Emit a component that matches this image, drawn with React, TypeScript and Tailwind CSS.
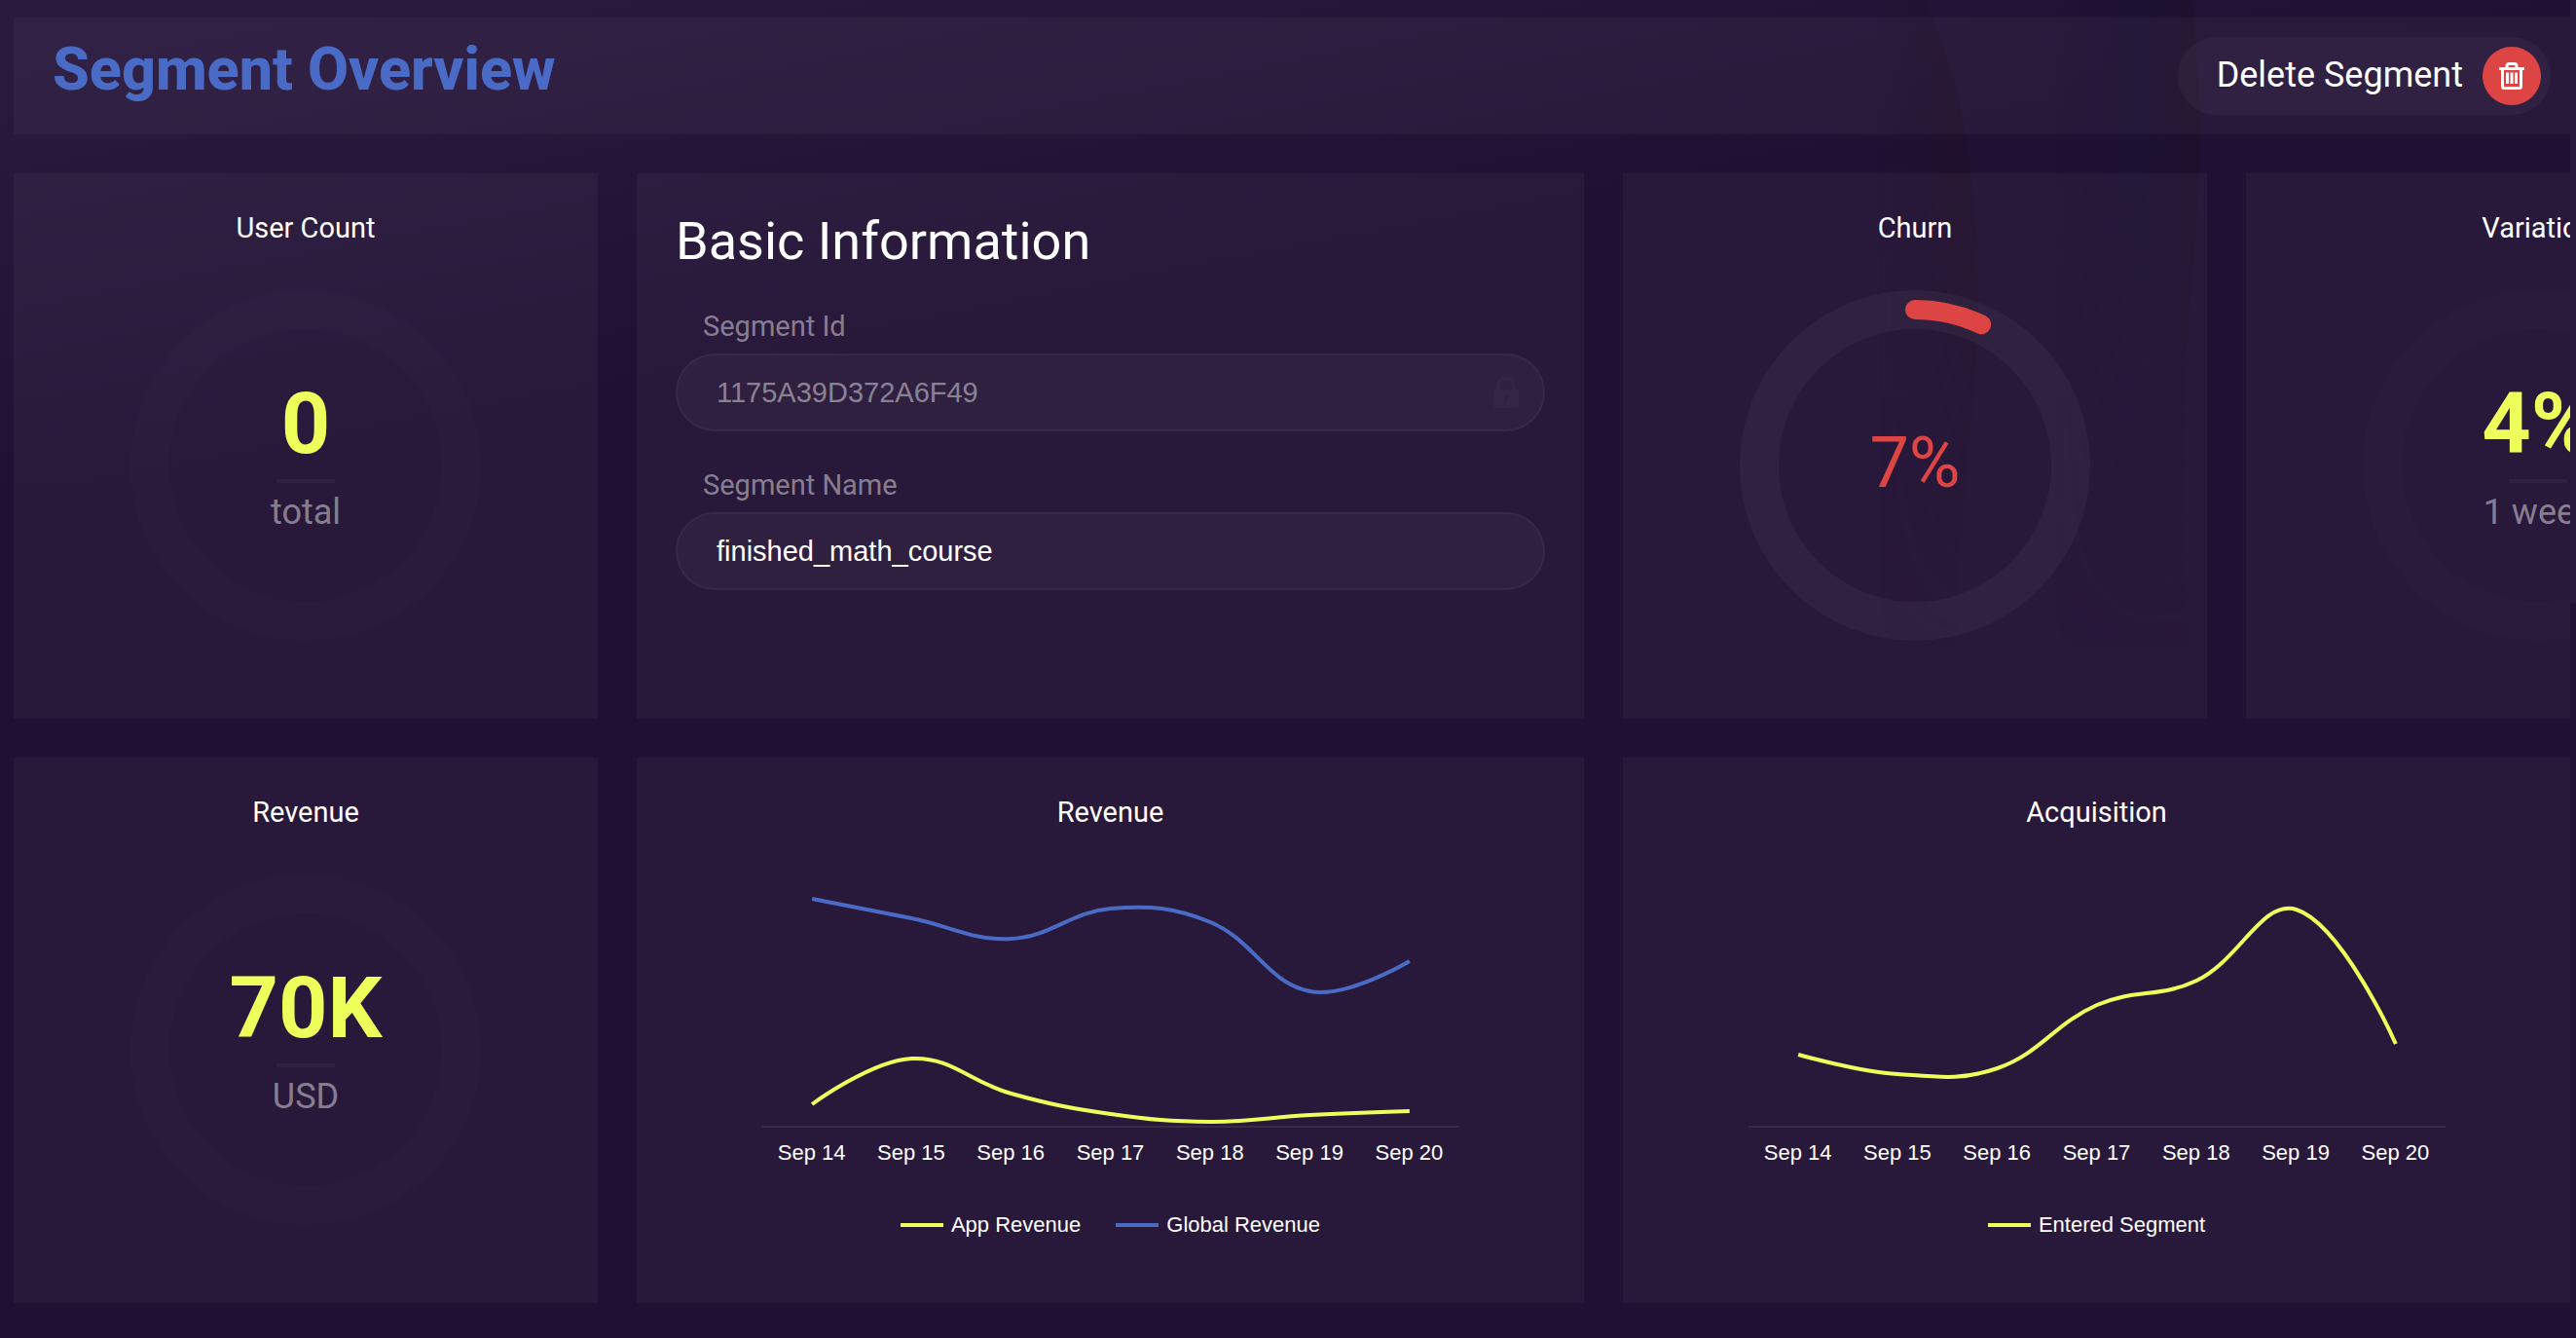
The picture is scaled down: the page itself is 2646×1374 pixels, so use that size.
import type { ReactNode } from "react";

type Series = { name: string; color: string; points: number[] };

const DAYS = ["Sep 14", "Sep 15", "Sep 16", "Sep 17", "Sep 18", "Sep 19", "Sep 20"];
const YELLOW = "#eeff5c";
const BLUE = "#4a6bc5";

const REVENUE: Series[] = [
  { name: "App Revenue", color: YELLOW, points: [234, 187, 223, 244, 252, 245, 241] },
  { name: "Global Revenue", color: BLUE, points: [23, 43, 64, 33, 47, 118, 87] },
];

const ACQUISITION: Series[] = [
  { name: "Entered Segment", color: YELLOW, points: [183, 203, 197, 132, 107, 34, 172] },
];

const CHART_WIDTH = 716;
const STEP = CHART_WIDTH / 7;

/* Smooth curve through evenly spaced points; the two ends carry no tangent. */
function curve(values: number[]): string {
  const pts = values.map((y, i) => ({ x: STEP * (i + 0.5), y }));
  const cps = pts.map((p, i) => {
    if (i === 0 || i === pts.length - 1) return { before: p, after: p };
    const a = pts[i - 1];
    const b = pts[i + 1];
    const d1 = Math.hypot(p.x - a.x, p.y - a.y);
    const d2 = Math.hypot(b.x - p.x, b.y - p.y);
    const f1 = (0.4 * d1) / (d1 + d2);
    const f2 = (0.4 * d2) / (d1 + d2);
    return {
      before: { x: p.x - f1 * (b.x - a.x), y: p.y - f1 * (b.y - a.y) },
      after: { x: p.x + f2 * (b.x - a.x), y: p.y + f2 * (b.y - a.y) },
    };
  });
  return pts
    .map((p, i) => {
      if (i === 0) return `M${p.x} ${p.y}`;
      const c1 = cps[i - 1].after;
      const c2 = cps[i].before;
      return `C${c1.x} ${c1.y} ${c2.x} ${c2.y} ${p.x} ${p.y}`;
    })
    .join(" ");
}

function Card({ title, children, className = "" }: { title: string; children: ReactNode; className?: string }) {
  return (
    <section className={`flex h-[560px] flex-col items-center bg-white/[0.035] px-10 pt-10 ${className}`}>
      <h2 className="text-[29px] leading-8 text-white">{title}</h2>
      {children}
    </section>
  );
}

function StatCard({ title, value, unit, className }: { title: string; value: string; unit: string; className?: string }) {
  return (
    <Card title={title} className={className}>
      <div className="mt-12 flex size-[360px] shrink-0 flex-col items-center rounded-full border-[40px] border-white/[0.012] pt-11">
        <span className="text-[88px] leading-[106px] font-bold text-[#eeff5c]">{value}</span>
        <span className="mt-1 h-1 w-[60px] bg-white/[0.035]" />
        <span className="mt-1.5 text-[36px] leading-12 text-white/45">{unit}</span>
      </div>
    </Card>
  );
}

function ChurnCard({ percent }: { percent: number }) {
  const length = 2 * Math.PI * 160;
  return (
    <Card title="Churn" className="w-[600px] shrink-0">
      <div className="relative mt-12 flex size-[360px] shrink-0 items-center justify-center">
        <svg className="absolute inset-0 size-full" viewBox="0 0 360 360" fill="none" aria-hidden="true">
          <circle cx="180" cy="180" r="160" stroke="white" strokeOpacity="0.04" strokeWidth="40" />
          <circle
            cx="180"
            cy="180"
            r="160"
            stroke="#dd4444"
            strokeWidth="20"
            strokeLinecap="round"
            strokeDasharray={`${(length * percent) / 100} ${length}`}
            transform="rotate(-90 180 180)"
          />
        </svg>
        <span className="pb-1 text-[72px] leading-[84px] text-[#dd4444]">{percent}%</span>
      </div>
    </Card>
  );
}

function ChartCard({ title, series }: { title: string; series: Series[] }) {
  return (
    <Card title={title} className="min-w-0">
      <div className="mt-[50px] flex w-full max-w-[716px] flex-col font-['Liberation_Sans',Arial,sans-serif] text-[22px] leading-7 text-white">
        <svg className="block w-full" viewBox="0 0 716 258" fill="none" role="img" aria-label={title}>
          <path d="M0 257H716" stroke="white" strokeOpacity="0.08" strokeWidth="2" />
          {series.map((s) => (
            <path key={s.name} d={curve(s.points)} stroke={s.color} strokeWidth="4" strokeLinejoin="round" />
          ))}
        </svg>
        <div className="mt-3 grid grid-cols-7 text-center whitespace-nowrap">
          {DAYS.map((day) => (
            <span key={day}>{day}</span>
          ))}
        </div>
        <ul className="mt-[46px] flex justify-center gap-9">
          {series.map((s) => (
            <li key={s.name} className="flex items-center gap-2">
              <span className="h-1 w-11" style={{ backgroundColor: s.color }} />
              {s.name}
            </li>
          ))}
        </ul>
      </div>
    </Card>
  );
}

function Field({ id, label, value, locked = false }: { id: string; label: string; value: string; locked?: boolean }) {
  return (
    <div className="flex flex-col">
      <label htmlFor={id} className="pl-7 text-[29px] leading-9 text-white/45">
        {label}
      </label>
      <div className="relative mt-2.5">
        <input
          id={id}
          type="text"
          defaultValue={value}
          disabled={locked}
          className="h-20 w-full rounded-full border-2 border-white/[0.035] bg-white/[0.035] px-10 font-['Liberation_Sans',Arial,sans-serif] text-[29px] text-white outline-none disabled:text-white/45"
        />
        {locked && (
          <svg className="absolute top-6 right-[27px] h-8 w-[26px]" viewBox="0 0 26 32" aria-hidden="true">
            <path d="M5 14V9a8 8 0 0 1 16 0v5" fill="none" stroke="#342445" strokeWidth="4" />
            <path
              fillRule="evenodd"
              fill="#342445"
              d="M3 13h20a3 3 0 0 1 3 3v13a3 3 0 0 1-3 3H3a3 3 0 0 1-3-3V16a3 3 0 0 1 3-3Zm10 6a2 2 0 0 0-1 3.700V27h2v-4.300A2 2 0 0 0 13 19Z"
            />
          </svg>
        )}
      </div>
    </div>
  );
}

function TrashIcon() {
  return (
    <svg className="h-7 w-[26px]" viewBox="0 0 26 28" fill="none" stroke="white" aria-hidden="true">
      <path d="M0 6.500H26" strokeWidth="3" />
      <path d="M8 6V4a2.500 2.500 0 0 1 2.500-2.500h5A2.500 2.500 0 0 1 18 4v2" strokeWidth="3" />
      <path d="M3.500 6.500V24.500a2 2 0 0 0 2 2h15a2 2 0 0 0 2-2V6.500" strokeWidth="3" />
      <path d="M8.500 10.500V22M13 10.500V22M17.500 10.500V22" strokeWidth="3" />
    </svg>
  );
}

/* Soft glow in the top-left corner and the faint waves behind the cards. */
function Backdrop() {
  return (
    <svg
      className="pointer-events-none absolute inset-0 -z-10 size-full"
      viewBox="0 0 2646 1374"
      preserveAspectRatio="none"
      aria-hidden="true"
    >
      <defs>
        <linearGradient id="glow" gradientUnits="userSpaceOnUse" x1="300" y1="0" x2="390" y2="460">
          <stop offset="0" stopColor="#2a1a3e" />
          <stop offset="1" stopColor="#2a1a3e" stopOpacity="0" />
        </linearGradient>
        <linearGradient id="waveA" gradientUnits="userSpaceOnUse" x1="1930" y1="0" x2="2030" y2="0">
          <stop offset="0" stopColor="#1f1029" stopOpacity="0" />
          <stop offset="1" stopColor="#1f1029" stopOpacity="0.800" />
        </linearGradient>
        <linearGradient id="waveB" gradientUnits="userSpaceOnUse" x1="2110" y1="0" x2="2260" y2="0">
          <stop offset="0" stopColor="#1c1133" stopOpacity="0" />
          <stop offset="0.600" stopColor="#1c1133" />
          <stop offset="1" stopColor="#1f102a" stopOpacity="0.800" />
        </linearGradient>
        <linearGradient id="fade" x1="0" y1="0" x2="0" y2="1">
          <stop offset="0.200" stopColor="white" />
          <stop offset="0.900" stopColor="black" />
        </linearGradient>
        <mask id="fadeMask">
          <rect width="2646" height="740" fill="url(#fade)" />
        </mask>
      </defs>
      <rect width="2646" height="500" fill="url(#glow)" />
      <g mask="url(#fadeMask)">
        <path d="M1900 0H1978C2040 140 2040 320 2018 500C2010 580 2008 660 2008 740H1900Z" fill="url(#waveA)" />
        <path d="M2110 0H2252C2262 100 2262 180 2252 280C2240 430 2236 560 2256 740H2110Z" fill="url(#waveB)" />
      </g>
      <path d="M0 1055C330 1100 400 1220 470 1374H0Z" fill="white" fillOpacity="0.005" />
      <path d="M2040 740C2090 1050 2300 1240 2646 1374V740Z" fill="white" fillOpacity="0.004" />
    </svg>
  );
}

export default function App() {
  return (
    <div className="relative isolate min-h-screen overflow-hidden bg-[#201033] font-[Roboto,sans-serif]">
      <Backdrop />
      <div className="absolute top-0 right-0 h-[620px] w-1.5 rounded-b-full bg-[#29193c]" />
      <main className="mr-1.5 flex flex-col gap-10 overflow-hidden pt-[18px] pb-9 pl-3.5">
        <header className="flex h-[120px] items-center justify-between bg-white/[0.035] pr-5 pl-10">
          <h1 className="pb-3.5 text-[61px] leading-[72px] font-extrabold text-[#4a6bc5]">Segment Overview</h1>
          <button type="button" className="flex h-20 items-center gap-5 rounded-full bg-white/[0.035] pr-2.5 pl-10 text-[36px] text-white">
            <span className="pb-0.5">Delete Segment</span>
            <span className="flex size-[60px] items-center justify-center rounded-full bg-[#dd4444]">
              <TrashIcon />
            </span>
          </button>
        </header>

        <div className="flex gap-10">
          <StatCard title="User Count" value="0" unit="total" className="w-[600px] shrink-0" />
          <section className="flex h-[560px] w-[calc((100%-680px)/2)] shrink-0 flex-col bg-white/[0.035] px-10 pt-10">
            <h2 className="text-[54px] leading-[60px] text-white">Basic Information</h2>
            <div className="mt-[39px] flex flex-col gap-[37px]">
              <Field id="segment-id" label="Segment Id" value="1175A39D372A6F49" locked />
              <Field id="segment-name" label="Segment Name" value="finished_math_course" />
            </div>
          </section>
          <ChurnCard percent={7} />
          <StatCard title="Variation" value="4%" unit="1 week" className="w-[600px] shrink-0" />
        </div>

        <div className="grid grid-cols-[600px_minmax(0,1fr)_minmax(0,1fr)] gap-10">
          <StatCard title="Revenue" value="70K" unit="USD" />
          <ChartCard title="Revenue" series={REVENUE} />
          <ChartCard title="Acquisition" series={ACQUISITION} />
        </div>
      </main>
    </div>
  );
}
